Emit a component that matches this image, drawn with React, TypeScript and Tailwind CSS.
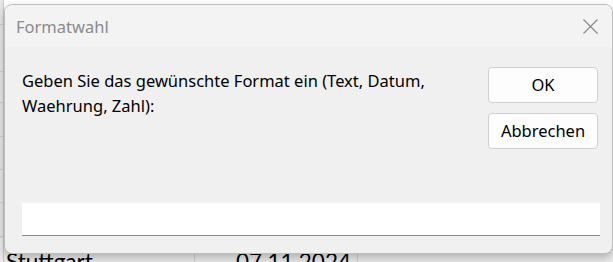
const rows = [25, 47, 31, 34, 33, 33, 34]

function Sheet() {
  return (
    <div className="flex h-full w-full flex-col bg-white">
      <div className="flex flex-1">
        <div className="flex w-[4px] flex-col border-r border-[#c8c8c8] bg-[#e6e6e6]">
          {rows.map((h, i) => (
            <div key={i} className="border-b border-[#cfcfcf]" style={{ height: h }} />
          ))}
        </div>
        <div className="flex-1" />
      </div>
      <div className="flex h-[25px] items-start overflow-hidden border-t border-[#d6d6d6] bg-[#ececec] font-['Lato',sans-serif] text-[22.5px] leading-[25px] text-black">
        <div className="h-full w-[4px] border-r border-[#c8c8c8]" />
        <div className="h-full w-[191px] border-r border-[#d0d0d0] pl-[2px] pt-[11px]">Stuttgart</div>
        <div className="h-full w-[163px] border-r border-[#d0d0d0] pl-[41px] pt-[11px]">07.11.2024</div>
      </div>
    </div>
  )
}

function App() {
  return (
    <div className="relative h-[262px] w-[613px] overflow-hidden font-['Noto_Sans',sans-serif]">
      <Sheet />
      <div className="absolute left-[4px] top-[4px] flex h-[250px] w-[609px] flex-col overflow-hidden rounded-[8px] border border-[#bdbdbd] bg-[#f0f0f0] shadow-[0_4px_10px_rgba(0,0,0,0.25)]">
        <div className="flex h-[42px] items-center justify-between bg-[#f3f3f3] pl-[11px] pr-[14px] pt-[3px]">
          <span className="text-[16.5px] text-[#8a8a8a]">Formatwahl</span>
          <svg width="15" height="15" viewBox="0 0 15 15" className="mb-[2px]">
            <path d="M0.5 0.5L14.5 14.5M14.5 0.5L0.5 14.5" stroke="#8a8a8a" strokeWidth="1.2" fill="none" />
          </svg>
        </div>
        <div className="flex flex-1 flex-col pb-[17px] pl-[17px] pr-[14px]">
          <div className="flex flex-1 justify-between pt-[21px]">
            <p className="w-[440px] text-[16.5px] leading-[25px] text-black">
              Geben Sie das gewünschte Format ein (Text, Datum, Waehrung, Zahl):
            </p>
            <div className="-mt-[1px] flex flex-col gap-[10px]">
              <button className="h-[36px] w-[110px] rounded-[4px] border border-[#d0d0d0] bg-[#fdfdfd] text-[16.5px] text-black">
                OK
              </button>
              <button className="h-[36px] w-[110px] rounded-[4px] border border-[#d0d0d0] bg-[#fdfdfd] text-[16.5px] text-black">
                Abbrechen
              </button>
            </div>
          </div>
          <input
            className="h-[33px] w-[578px] border-b border-[#8a8a8a] bg-white px-2 text-[16px] outline-none"
            defaultValue=""
          />
        </div>
      </div>
    </div>
  )
}

export default App
